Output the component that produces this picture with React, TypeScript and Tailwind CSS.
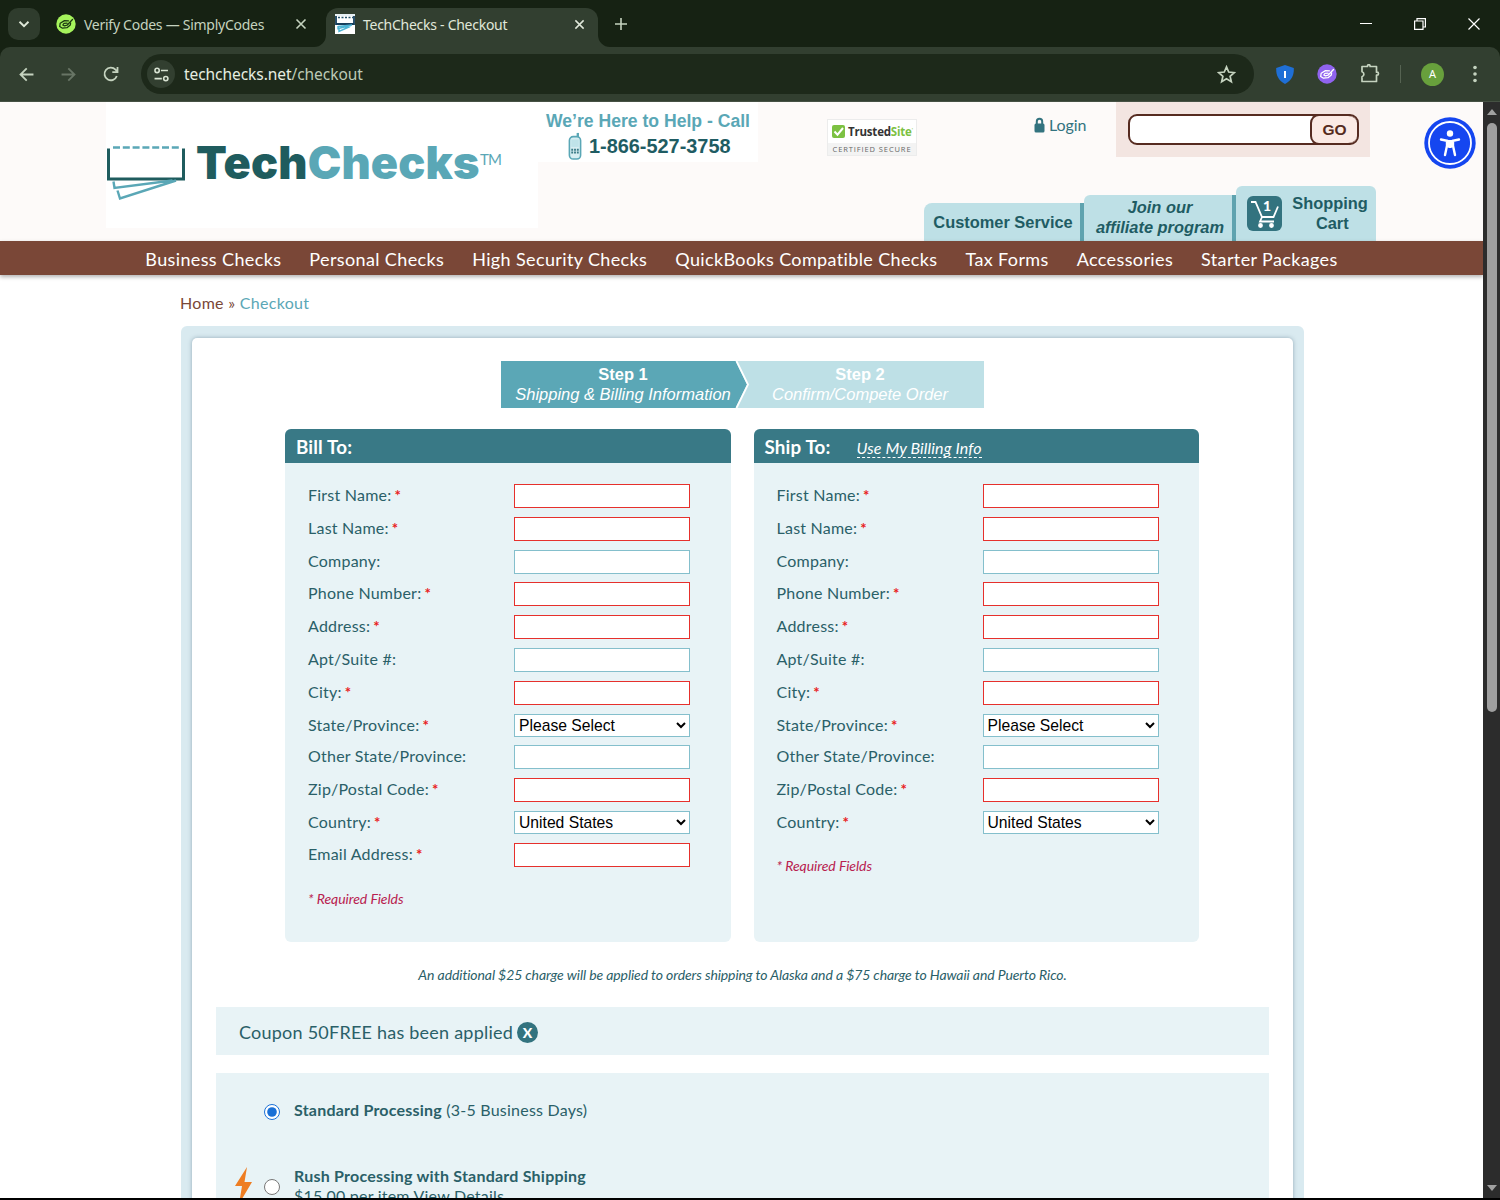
import clsx from "clsx";

type FieldDef = {
  label: string;
  required?: boolean;
  options?: string[];
};

const fields: FieldDef[] = [
  { label: "First Name:", required: true },
  { label: "Last Name:", required: true },
  { label: "Company:" },
  { label: "Phone Number:", required: true },
  { label: "Address:", required: true },
  { label: "Apt/Suite #:" },
  { label: "City:", required: true },
  { label: "State/Province:", required: true, options: ["Please Select"] },
  { label: "Other State/Province:" },
  { label: "Zip/Postal Code:", required: true },
  { label: "Country:", required: true, options: ["United States"] },
];

const navItems = [
  "Business Checks",
  "Personal Checks",
  "High Security Checks",
  "QuickBooks Compatible Checks",
  "Tax Forms",
  "Accessories",
  "Starter Packages",
];

function CloseIcon({ className }: { className?: string }) {
  return (
    <svg viewBox="0 0 12 12" className={className} fill="none" stroke="currentColor" strokeWidth="1.6">
      <path d="M1.5 1.5l9 9M10.5 1.5l-9 9" />
    </svg>
  );
}

function SimplyMark({ bg, fg }: { bg: string; fg: string }) {
  return (
    <svg viewBox="0 0 20 20" className="w-5 h-5 shrink-0" fill="none" stroke={fg} strokeWidth="1.3" strokeLinecap="round" strokeLinejoin="round">
      <circle cx="10" cy="10" r="9.7" fill={bg} stroke="none" />
      <path d="M12.500 6.800L8.500 6.600 4.200 9.200 3.700 12.500 6.500 14.200 11 13.700 14.300 11 14.600 8.800" />
      <path d="M11 9.200L8 9.300 6.800 11l1.700.8 2.500-.6L16.500 5.500" />
    </svg>
  );
}

function TabStrip() {
  return (
    <div className="flex h-[47px] bg-[#162213] text-[#c5d3bf]">
      <div className="flex w-8 h-8 mt-2 ml-2 items-center justify-center rounded-[10px] bg-[#2f3c2d]">
        <svg viewBox="0 0 12 12" className="w-3 h-3" fill="none" stroke="#dfe8d9" strokeWidth="1.9">
          <path d="M1.500 3.800L6 8.200l4.500-4.400" />
        </svg>
      </div>
      <div className="flex w-[286px] h-8 mt-2 pl-4 items-center">
        <SimplyMark bg="#a6f45c" fg="#1d3a12" />
        <span className="ml-2 w-[208px] leading-[21px] text-[14px] tracking-[-0.270px] whitespace-nowrap">Verify Codes — SimplyCodes</span>
        <CloseIcon className="w-3 h-3 ml-[3px]" />
      </div>
      <div className="relative flex w-[272px] h-[39px] mt-2 pl-[9px] pb-[7px] items-center rounded-t-[12px] bg-[#323f30] text-[#e0e8da]">
        <svg viewBox="0 0 12 12" className="absolute -left-3 bottom-0 w-3 h-3" fill="#323f30">
          <path d="M12 0v12H0A12 12 0 0 0 12 0z" />
        </svg>
        <svg viewBox="0 0 12 12" className="absolute -right-3 bottom-0 w-3 h-3" fill="#323f30">
          <path d="M0 0v12h12A12 12 0 0 1 0 0z" />
        </svg>
        <svg viewBox="0 0 20 20" className="w-5 h-5">
          <path fill="#fff" d="M0 0h20v20H0z" />
          <path d="M0 0h20v2H0z" fill="#e8f1f5" />
          <path d="M3 3.500h15" stroke="#24526b" strokeWidth="1.700" strokeDasharray="2 1.500" />
          <path d="M1 2v8h18V2" stroke="#163f5c" strokeWidth="1.800" fill="none" />
          <path d="M3 12.500l14-1.500M3 12v2.500l13-3M4 15v2.500l11-5" stroke="#4db4d4" strokeWidth="1.400" fill="none" />
        </svg>
        <span className="ml-2 w-[209px] leading-[21px] text-[14px] tracking-[-0.270px] whitespace-nowrap">TechChecks - Checkout</span>
        <CloseIcon className="w-[11px] h-[11px] ml-[2px]" />
      </div>
      <svg viewBox="0 0 12 12" className="w-3 h-3 mt-[18px] ml-[17px]" fill="none" stroke="currentColor" strokeWidth="1.6">
        <path d="M6 0v12M0 6h12" />
      </svg>
      <div className="flex flex-1 justify-end items-center gap-[42px] pr-[20px] text-white">
        <svg viewBox="0 0 12 12" className="w-3 h-3 ml-px" stroke="currentColor"><path d="M0 5.500h12" /></svg>
        <svg viewBox="0 0 12 12" className="w-3 h-3" fill="none" stroke="currentColor" strokeWidth="1.200">
          <path d="M.6 3h8.400v8.400H.6zM3 3V.6h8.400V9H9" />
        </svg>
        <svg viewBox="0 0 12 12" className="w-3 h-3" fill="none" stroke="currentColor" strokeWidth="1.200">
          <path d="M.5 .5l11 11M11.500 .5l-11 11" />
        </svg>
      </div>
    </div>
  );
}

function Toolbar() {
  return (
    <div className="flex h-[55px] items-center bg-[#323f30] border-b border-[#465144] text-[#c5d3bf] rounded-t-[10px]">
      <svg viewBox="0 0 14 14" className="w-[15px] h-[15px] ml-[19px]" fill="none" stroke="currentColor" strokeWidth="1.700">
        <path d="M13.500 7H1.500M7.200 1.200L1.400 7l5.800 5.800" />
      </svg>
      <svg viewBox="0 0 14 14" className="w-[15px] h-[15px] ml-[27px] text-[#687565]" fill="none" stroke="currentColor" strokeWidth="1.700">
        <path d="M.5 7h12M6.800 1.200L12.600 7l-5.800 5.800" />
      </svg>
      <svg viewBox="0 0 16 16" className="w-4 h-4 ml-[27px]" fill="none" stroke="currentColor" strokeWidth="1.800">
        <path d="M13.800 10A6.300 6.300 0 1 1 12.500 3.700L14.300 5.500M14.500 1v5.200H9.300" />
      </svg>
      <div className="flex w-[1113px] h-10 ml-[22px] items-center rounded-full bg-[#1d291a]">
        <div className="flex w-7 h-7 ml-[6px] items-center justify-center rounded-full bg-[#323f30]">
          <svg viewBox="0 0 14 14" className="w-[15px] h-[15px]" fill="none" stroke="#d8e3d2" strokeWidth="1.500">
            <circle cx="2.900" cy="3.200" r="2" />
            <circle cx="11" cy="10.800" r="2" />
            <path d="M6.500 3.200H13M.5 10.800h6.800" />
          </svg>
        </div>
        <div className="ml-[9px] pt-[2px] text-[15.500px] text-[#bccab6] tracking-[-0.060px]">
          <span className="text-[#e6eee1]">techchecks.net</span>/checkout
        </div>
        <svg viewBox="0 0 18 18" className="w-[19px] h-[19px] ml-auto mr-[18px]" fill="none" stroke="#c5d3bf" strokeWidth="1.600">
          <path d="M9 1.800l2.100 4.900 5.300.5-4 3.500 1.200 5.200L9 13.100l-4.600 2.800 1.200-5.200-4-3.500 5.300-.5z" />
        </svg>
      </div>
      <svg viewBox="0 0 18 19" className="w-[18px] h-[19px] ml-[22px]">
        <path fill="#1f6fd6" d="M9 0l8.800 3c.3 6.500-1.500 12-8.800 16C1.700 15 0 9.500.2 3z" />
        <path d="M9 6v7" stroke="#fff" strokeWidth="2" />
      </svg>
      <div className="ml-[23px]">
        <SimplyMark bg="#9063ef" fg="#fff" />
      </div>
      <svg viewBox="0 0 20 20" className="w-5 h-5 ml-[23px]" fill="none" stroke="currentColor" strokeWidth="1.700" strokeLinejoin="round">
        <path d="M2 2.500h5.500V2a1.300 1.300 0 0 1 2.600 0v.5H16.500v5.700h.5a1.500 1.500 0 0 1 0 3h-.5V17.500H2v-4.800a2.600 2.600 0 0 0 0-5z" />
      </svg>
      <div className="w-px h-[18px] ml-[20px] bg-[#566352]" />
      <div className="flex w-[23px] h-[23px] ml-[20px] items-center justify-center rounded-full bg-[#68a03c] text-white text-[11px]">A</div>
      <svg viewBox="0 0 4 18" className="w-1 h-[18px] ml-[29px]" fill="currentColor">
        <circle cx="2" cy="2.500" r="1.800" />
        <circle cx="2" cy="9" r="1.800" />
        <circle cx="2" cy="15.500" r="1.800" />
      </svg>
    </div>
  );
}

function Logo() {
  return (
    <div className="flex w-[432px] h-[126px] bg-white">
      <svg viewBox="0 0 80 58" className="w-20 h-[58px] mt-[41px]" fill="none">
        <path d="M7 4.500h66" stroke="#5aa7b6" strokeWidth="2.600" strokeDasharray="7 2.800" />
        <path d="M2.500 5.500v30.500h75V5.500" stroke="#1f5c5e" strokeWidth="3" />
        <path d="M7.500 38.500l1 6.500 58-7.500M11.500 47.500l2.500 8L70 37.500" stroke="#5aa7b6" strokeWidth="2.400" />
      </svg>
      <div className="w-[284px] ml-[10px] mt-[36px] font-['Inter'] font-black text-[45px] leading-[50px] tracking-[0.150px] text-[#1f5c5e] whitespace-nowrap">
        Tech<span className="text-[#5aa7b6]">Checks</span>
      </div>
      <div className="mt-[47px] font-['Lato'] text-[15px] leading-5 tracking-[-0.800px] text-[#5aa7b6]">TM</div>
    </div>
  );
}

function HelpLine() {
  return (
    <div className="w-[220px] h-[60px] bg-white pt-[9px] pl-2 font-['Liberation_Sans'] font-bold whitespace-nowrap">
      <div className="text-[17.600px] leading-[21px] text-[#5aa7b6]">We’re Here to Help - Call</div>
      <div className="flex items-center pl-[22px]">
        <svg viewBox="0 0 14 30" className="w-[14px] h-[28px] -mt-[1px]" fill="none">
          <path d="M10 1v5" stroke="#5aa7b6" strokeWidth="2.500" />
          <rect x="1" y="5" width="12" height="24" rx="4" fill="#d7eef2" stroke="#5aa7b6" strokeWidth="1.700" />
          <path d="M3 8h8v8H3z" fill="#bfe3e9" />
          <path d="M3 19h8M3 22h8" stroke="#3a7a86" strokeWidth="2" strokeDasharray="2 1" />
        </svg>
        <div className="ml-[7px] text-[19.900px] leading-7 text-[#1f5c63]">1-866-527-3758</div>
      </div>
    </div>
  );
}

function TrustBadge() {
  return (
    <div className="w-[90px] h-[37px] mt-[17px] bg-white border border-[#ececec] whitespace-nowrap">
      <div className="flex h-[23px] items-center pl-1">
        <svg viewBox="0 0 13 13" className="w-[13px] h-[13px]">
          <rect width="13" height="13" rx="2" fill="#7cc142" />
          <path d="M2.500 6.500l3 3.200L11 3" stroke="#fff" strokeWidth="2" fill="none" />
        </svg>
        <span className="ml-[3px] font-['Open_Sans'] font-bold text-[11.500px] tracking-[-0.200px] text-[#333]">
          Trusted<span className="text-[#7cc142]">Site</span>
        </span>
        <span className="text-[6px] text-[#7cc142] -mt-1">'</span>
      </div>
      <div className="h-3 bg-[#f3f3f3] text-center font-['Open_Sans'] text-[7.500px] leading-[12px] tracking-[0.900px] text-[#666]">CERTIFIED SECURE</div>
    </div>
  );
}

function HeaderTabs() {
  return (
    <div className="flex items-end justify-end text-center font-['Liberation_Sans'] font-bold text-[16.400px] leading-5 text-[#1f5c63] whitespace-nowrap">
      <div className="w-[160px] h-[38px] pt-[9px] pl-[2px] rounded-tl-lg bg-[#bee0e6] border-r-4 border-[#5fa3af]">Customer Service</div>
      <div className="w-[152px] h-[46px] pt-[2px] pl-1 rounded-tl-md bg-[#bee0e6] border-r-4 border-[#5fa3af] italic">
        Join our
        <br />
        affiliate program
      </div>
      <div className="flex w-[140px] h-[55px] rounded-t-md bg-[#bee0e6] pl-[11px] pt-[7px]">
        <div className="relative mt-[3px] w-[35px] h-[35px] rounded-md bg-[#33737f]">
          <svg viewBox="0 0 35 35" className="w-full h-full" fill="none" stroke="#fff" strokeWidth="1.800">
            <path d="M4 6h4.500L15 21H26.500L31 10.500M15 21l-2 4.500H27" />
            <circle cx="13.500" cy="29.500" r="1.500" fill="#fff" />
            <circle cx="24.500" cy="29.500" r="1.500" fill="#fff" />
          </svg>
          <span className="absolute left-[16px] top-0 font-['Lato'] font-black text-[14px] text-white">1</span>
        </div>
        <div className="flex-1 -ml-[1px] pl-[3px]">
          Shopping
          <br />
          &nbsp;Cart
        </div>
      </div>
    </div>
  );
}

function SiteHeader() {
  return (
    <header className="relative flex h-[139px] pl-[106px] bg-[#fdfaf9]">
      <Logo />
      <HelpLine />
      <div className="flex flex-col justify-between w-[618px]">
        <div className="flex">
          <div className="ml-[69px]">
            <TrustBadge />
          </div>
          <div className="flex ml-[117px] mt-[11px] h-6 items-center text-[#33737f] text-[16px] tracking-[-0.100px]">
            <svg viewBox="0 0 11 16" className="w-[11px] h-4 mr-1">
              <path d="M2.800 8V4.500a2.700 2.700 0 0 1 5.400 0V8" stroke="#33737f" strokeWidth="2" fill="none" />
              <rect x="0.500" y="6.500" width="10" height="9" rx="1.500" fill="#33737f" />
            </svg>
            Login
          </div>
          <div className="flex w-[254px] h-[55px] ml-auto mr-[6px] bg-[#f3e5e1] pl-3 pt-3">
            <div className="flex w-[231px] h-[31px] rounded-[9px] border-2 border-[#562b20] bg-white overflow-hidden">
              <input className="w-[180px] outline-none" />
              <button className="-mt-[2px] h-[31px] flex-1 rounded-[9px] border-2 border-r-0 border-[#562b20] bg-[#fbeae4] font-['Liberation_Sans'] font-bold text-[15.500px] text-[#562b20]">GO</button>
            </div>
          </div>
        </div>
        <HeaderTabs />
      </div>
      <svg viewBox="0 0 52 52" className="absolute left-[1424px] top-[15px] w-[52px] h-[52px]">
        <circle cx="26" cy="26" r="25.700" fill="#1546f0" />
        <circle cx="26" cy="26" r="21" fill="none" stroke="#fff" strokeWidth="1.800" />
        <circle cx="26" cy="16.500" r="3.200" fill="#fff" />
        <path d="M17 22.500l6 1.200v5L21 38M35 22.500l-6 1.200v5L31 38" stroke="#fff" strokeWidth="2.400" strokeLinecap="round" fill="none" />
        <path d="M23 23h6v7l-2 1h-2l-2-1z" fill="#fff" />
      </svg>
    </header>
  );
}

function Field({ field }: { field: FieldDef }) {
  return (
    <div className={clsx("flex", field.options ? "h-[31.800px]" : "h-[32.800px]")}>
      <label className="w-[206px] leading-[22px]">
        {field.label}
        {field.required && <span className="ml-[3px] text-[#e8201c] font-bold text-[15px]">*</span>}
      </label>
      {field.options ? (
        <select className="w-[176px] h-[23px] pl-0 border border-[#84bfcc] bg-white font-['Liberation_Sans'] text-[15.700px] leading-5 text-black tracking-normal">
          {field.options.map((o) => (
            <option key={o}>{o}</option>
          ))}
        </select>
      ) : (
        <input
          className={clsx(
            "w-[176px] h-6 bg-white border outline-none",
            field.required ? "border-[#e6302c]" : "border-[#84bfcc]"
          )}
        />
      )}
    </div>
  );
}

function AddressPanel({ title, link, items }: { title: string; link?: string; items: FieldDef[] }) {
  return (
    <section className="w-[445.500px] h-[513px] rounded-md overflow-hidden bg-[#e8f3f6]">
      <div className="flex h-[34px] items-center pt-[3px] pl-[11px] bg-[#397986] text-white">
        <h2 className="font-bold text-[18.800px] tracking-[0.150px]">{title}</h2>
        {link && (
          <a className="ml-[26px] italic text-[16px] leading-[19px] tracking-[0.120px] border-b border-dashed border-white">{link}</a>
        )}
      </div>
      <div className="pt-[21px] pl-[23px] text-[16px] tracking-[0.230px]">
        {items.map((f) => (
          <Field key={f.label} field={f} />
        ))}
        <div className="mt-3 italic text-[14px] tracking-[-0.050px] text-[#b8214f]">* Required Fields</div>
      </div>
    </section>
  );
}

function Steps() {
  return (
    <div className="relative flex w-[483px] h-[47px] mx-auto bg-[#bee0e6] text-center text-white font-['Liberation_Sans'] text-[16.500px] leading-5 whitespace-nowrap">
      <svg viewBox="0 0 248 47" className="absolute left-0 top-0 w-[248px] h-[47px]">
        <path d="M0 0h234.500l11.500 23.500L234.500 47H0z" fill="#5ba7b6" />
        <path d="M235.500 0L247 23.500 235.500 47" fill="none" stroke="#fff" strokeWidth="1.800" />
      </svg>
      <div className="relative w-[244px] pt-[3px]">
        <div className="font-bold">Step 1</div>
        <div className="italic">Shipping &amp; Billing Information</div>
      </div>
      <div className="relative w-[230px] pt-[3px]">
        <div className="font-bold">Step 2</div>
        <div className="italic">Confirm/Compete Order</div>
      </div>
    </div>
  );
}

function Checkout() {
  return (
    <div className="w-[1123px] h-[900px] ml-[181px] mt-[11px] p-[11px] pt-3 rounded-md bg-[#d9eaf0]">
      <div className="h-full rounded-[5px] bg-white px-6 pt-[23px] shadow-[0_0_4px_rgba(80,110,130,0.500)]">
        <Steps />
        <div className="flex justify-center gap-[23px] mt-[21px] -ml-px">
          <AddressPanel title="Bill To:" items={[...fields, { label: "Email Address:", required: true }]} />
          <AddressPanel title="Ship To:" link="Use My Billing Info" items={fields} />
        </div>
        <p className="mt-[22px] text-center italic text-[14px] leading-[22px] tracking-[-0.100px]">
          An additional $25 charge will be applied to orders shipping to Alaska and a $75 charge to Hawaii and Puerto Rico.
        </p>
        <div className="flex h-12 mt-[21px] pl-[23px] pt-[2px] items-center bg-[#e8f3f6] text-[18px] tracking-[0.230px]">
          Coupon 50FREE has been applied
          <span className="flex w-[21px] h-[21px] ml-1 mt-[1px] items-center justify-center rounded-full bg-[#33737f] text-white font-black text-[14px]">X</span>
        </div>
        <div className="h-[140px] mt-[18px] pt-[26px] bg-[#e8f3f6] text-[16px] tracking-[0.220px]">
          <div className="flex pl-12">
            <input type="radio" name="processing" defaultChecked className="w-4 h-4 mt-[5px] mr-[14px] accent-[#1a70d6]" />
            <div className="leading-[22px]">
              <b>Standard Processing</b> (3-5 Business Days)
            </div>
          </div>
          <div className="flex mt-[45px] pl-[19px]">
            <svg viewBox="0 0 17 37" className="w-[17px] h-[37px] mr-3 mt-[1px]">
              <path d="M12 0L0 19h7L4 37l13-22H9.500z" fill="#ee7d22" />
            </svg>
            <input type="radio" name="processing" className="w-4 h-4 mt-[13px] mr-[14px]" />
            <div className="leading-5">
              <b>Rush Processing with Standard Shipping</b>
              <br />
              $15.00 per item View Details
            </div>
          </div>
        </div>
      </div>
    </div>
  );
}

export default function App() {
  return (
    <div className="flex flex-col w-[1500px] h-[1200px] overflow-hidden bg-[#162213] font-['Noto_Sans']">
      <TabStrip />
      <Toolbar />
      <div className="flex h-[1096px] overflow-hidden bg-white">
        <main className="w-[1483px] h-full overflow-hidden bg-white font-['Lato'] text-[#2a6068]">
          <SiteHeader />
          <nav className="relative flex h-[34px] items-center justify-center gap-7 pt-[2px] bg-[#7a4737] text-white text-[18px] tracking-[0.370px] shadow-[0_2px_4px_rgba(0,0,0,0.300)] whitespace-nowrap">
            {navItems.map((item) => (
              <a key={item}>{item}</a>
            ))}
          </nav>
          <div className="mt-4 ml-[180px] text-[16px] leading-6 tracking-[0.300px] text-[#7a4737]">
            Home » <span className="text-[#5ba7b6]">Checkout</span>
          </div>
          <Checkout />
        </main>
        <div className="flex flex-col w-[17px] items-center justify-between bg-[#2c2c2c] py-[7px]">
          <div className="flex flex-col items-center">
            <svg viewBox="0 0 10 6" className="w-[10px] h-[6px]" fill="#a0a0a0"><path d="M5 0l5 6H0z" /></svg>
            <div className="w-[10px] h-[589px] mt-2 rounded-full bg-[#9f9f9f]" />
          </div>
          <svg viewBox="0 0 10 6" className="w-[10px] h-[6px]" fill="#a0a0a0"><path d="M0 0h10L5 6z" /></svg>
        </div>
      </div>
      <div className="h-[2px] bg-black" />
    </div>
  );
}
